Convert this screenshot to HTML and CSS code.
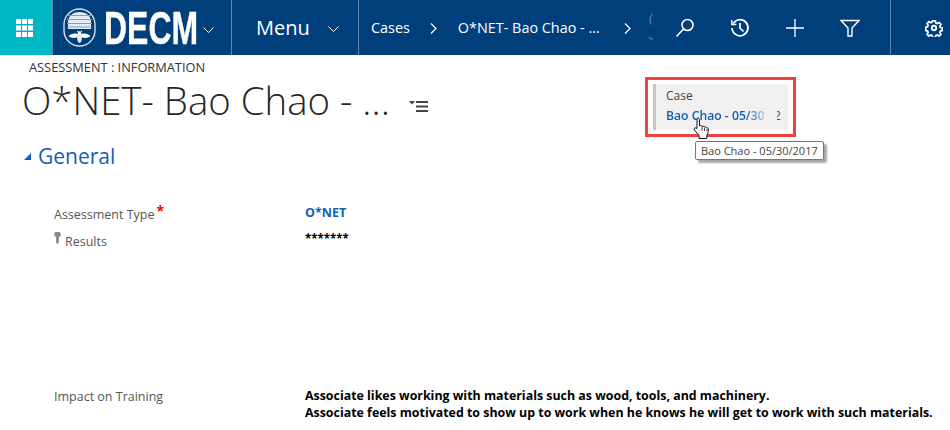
FILE: index.html
```html
<!DOCTYPE html>
<html lang="en">
<head>
    <meta charset="UTF-8">
    <meta name="viewport" content="width=device-width, initial-scale=1.0">
    <title>O*NET- Bao Chao</title>
    <link rel="stylesheet" href="styles.css">
</head>
<body>
    <header class="navbar">
        <div class="tile">
            <svg width="17" height="18" viewBox="0 0 17 18" fill="#fff">
                <rect x="0" y="0" width="5" height="5"/><rect x="6" y="0" width="5" height="5"/><rect x="12" y="0" width="5" height="5"/>
                <rect x="0" y="6.500" width="5" height="5"/><rect x="6" y="6.500" width="5" height="5"/><rect x="12" y="6.500" width="5" height="5"/>
                <rect x="0" y="13" width="5" height="5"/><rect x="6" y="13" width="5" height="5"/><rect x="12" y="13" width="5" height="5"/>
            </svg>
        </div>
        <div class="brand">
            <svg class="brand-mark" width="33" height="39" viewBox="0 0 33 39">
                <rect x="1" y="1" width="31" height="37" rx="15.500" fill="none" stroke="#d5e0ec" stroke-width="1.400"/>
                <path d="M5 21V14C5 8 10 4 16.500 4S28 8 28 14v7z" fill="#e4ebf3"/>
                <path d="M4 7.500h25M4 11.500h25M4 15.500h25M4 19h25" stroke="#7f9fc0" stroke-width="1"/>
                <path d="M16.500 27c-3-2.500-8-2-11 1 3 2.500 8 3 11-1zm0 0c3-2.500 8-2 11 1-3 2.500-8 3-11-1z" fill="#fff"/>
                <ellipse cx="16.500" cy="29" rx="2.500" ry="6" fill="#e4ebf3"/>
                <path d="M14 23l2.500 2 2.500-2" fill="none" stroke="#fff"/>
            </svg>
            <span class="brand-name"><span class="brand-text">DECM</span></span>
            <svg class="chevron" width="11" height="6" viewBox="0 0 11 6"><path d="M.5.500l5 5 5-5" fill="none" stroke="#fff"/></svg>
        </div>
        <div class="menu">
            <span>Menu</span>
            <svg class="chevron" width="11" height="6" viewBox="0 0 11 6"><path d="M.5.500l5 5 5-5" fill="none" stroke="#fff"/></svg>
        </div>
        <nav class="crumbs">
            <span>Cases</span>
            <svg class="crumb-sep" width="7" height="11" viewBox="0 0 7 11"><path d="M1 .500l5 5-5 5" fill="none" stroke="#fff" stroke-width="1.200"/></svg>
            <span>O*NET- Bao Chao - ...</span>
            <svg class="crumb-sep crumb-sep-last" width="7" height="11" viewBox="0 0 7 11"><path d="M1 .500l5 5-5 5" fill="none" stroke="#fff" stroke-width="1.200"/></svg>
            <svg class="crumb-ghost" width="6" height="28" viewBox="0 0 6 28" fill="none" stroke="#4a76a5" stroke-width="1.600"><path d="M4.500 1C2 3 1.500 8 3 11.500"/><path d="M1 24c1 1.500 2.500 2 4 2"/></svg>
        </nav>
        <div class="actions">
            <svg width="20" height="20" viewBox="0 0 20 20" fill="none" stroke="#fff" stroke-width="1.600"><circle cx="12.500" cy="7" r="5.500"/><path d="M8.500 11L1.500 18.500"/></svg>
            <svg width="20" height="20" viewBox="0 0 20 20" fill="none" stroke="#fff" stroke-width="1.700"><path d="M3.200 5.500A8 8 0 1 1 2 10"/><path d="M1.800 2v4.500h4.500" stroke-width="1.400"/><path d="M10 5v5l3.500 3.500"/></svg>
            <svg width="20" height="20" viewBox="0 0 20 20" fill="none" stroke="#fff" stroke-width="1.300"><path d="M10 1v18M1 10h18"/></svg>
            <svg width="20" height="20" viewBox="0 0 20 20" fill="none" stroke="#fff" stroke-width="1.400"><path d="M1 2.500h18L12 10v8H8v-8z"/></svg>
        </div>
        <div class="settings">
            <svg width="18" height="18" viewBox="0 0 18 18" fill="none" stroke="#fff" stroke-width="1.900"><circle cx="9" cy="9" r="2.200"/><path d="M7.500 1h3l.5 2.300 1.700.8 2-1.200 2 2.100-1.200 2 .7 1.500 2 .5v2.800l-2 .6-.7 1.600 1.200 2-2 2-2-1.200-1.700.7-.5 2.200h-3l-.5-2.200-1.700-.7-2 1.200-2-2 1.200-2-.7-1.600-2-.6V8l2-.5.7-1.500-1.200-2 2-2.100 2 1.200 1.700-.8z" transform="translate(.9 .9) scale(.9)"/></svg>
        </div>
    </header>

    <main class="page">
        <div class="record-head">
            <div class="record-title">
                <div class="entity">ASSESSMENT : INFORMATION</div>
                <div class="title-row">
                    <h1>O*NET- Bao Chao - ...</h1>
                    <svg width="20" height="12" viewBox="0 0 20 12" fill="#444">
                        <path d="M0 1h6L3 4.500z"/>
                        <rect x="7" y="1" width="12" height="2"/><rect x="7" y="5.500" width="12" height="2"/><rect x="7" y="10" width="12" height="2"/>
                    </svg>
                </div>
            </div>
            <div class="highlight">
                <div class="case-card">
                    <div class="case-label">Case</div>
                    <div class="case-value"><span class="case-link">Bao Chao - 05/30</span><span class="case-clip">2</span></div>
                </div>
                <div class="tooltip">Bao Chao - 05/30/2017</div>
                <svg class="cursor" width="18" height="23" viewBox="0 0 18 23">
                    <path d="M4 1.500c1-1 2.500-.5 2.500 1V9l1-.3c.6-.3 1.500 0 1.600.7.700-.4 1.800-.2 2 .6.800-.4 2-.1 2.200.8.600-.3 2 0 2 1.200 0 2.500-.2 4.500-1.500 6.500v3H6v-3L1.500 13c-1-1.500.5-3 2.500-1.500z" fill="#fff" stroke="#111" stroke-width="1"/>
                    <path d="M9 10v4M11.500 11v3M14 12v2" stroke="#111" stroke-width=".8"/>
                </svg>
            </div>
        </div>

        <h2 class="section"><span class="twisty"></span>General</h2>

        <div class="field field-type">
            <div class="field-label">Assessment Type<span class="required">*</span></div>
            <div class="field-value link">O*NET</div>
        </div>
        <div class="field field-results">
            <div class="field-label">
                <svg class="key" width="7" height="12" viewBox="0 0 7 13" fill="#8a8a8a"><path d="M1 0h5l1 2v2L5 5.500V12l-1.500 1L2 12V5.500L0 4V2z"/></svg>Results
            </div>
            <div class="field-value masked">*******</div>
        </div>
        <div class="field field-impact">
            <div class="field-label">Impact on Training</div>
            <div class="field-value strong">Associate likes working with materials such as wood, tools, and machinery.<br>Associate feels motivated to show up to work when he knows he will get to work with such materials.</div>
        </div>
    </main>
</body>
</html>
```

FILE: styles.css
```css
html, body {
    height: 430px;
    overflow: hidden;
}

body {
    font-family: 'Open Sans', sans-serif;
    margin: 0;
    padding: 0;
    background-color: #fff;
    color: #444;
}

.navbar {
    display: flex;
    height: 55px;
    background-color: #003e7c;
    color: #fff;
}

.tile {
    display: flex;
    align-items: center;
    justify-content: center;
    width: 52px;
    padding-right: 3px;
    box-sizing: border-box;
    background-color: #00b8c4;
    flex: none;
}

.brand {
    display: flex;
    align-items: center;
    width: 180px;
    padding-left: 10px;
    box-sizing: border-box;
    border-left: 1px solid #5f86ad;
    border-right: 1px solid #5f86ad;
    flex: none;
}

.brand-name {
    display: block;
    width: 93px;
    margin-left: 8px;
}

.brand-text {
    display: block;
    font-family: 'Liberation Sans', sans-serif;
    font-weight: bold;
    font-size: 47px;
    line-height: 54px;
    -webkit-text-stroke: 0.4px #fff;
    transform: scaleX(0.68);
    transform-origin: left center;
}

.brand .chevron {
    margin-left: 6px;
    margin-top: 5px;
}

.menu {
    display: flex;
    align-items: center;
    width: 127px;
    padding-left: 24px;
    box-sizing: border-box;
    border-right: 1px solid #5f86ad;
    font-size: 20px;
    flex: none;
}

.menu .chevron {
    margin-left: 18px;
    margin-top: 3px;
}

.crumbs {
    display: flex;
    align-items: center;
    width: 308px;
    padding-left: 12px;
    box-sizing: border-box;
    font-size: 14.4px;
    white-space: nowrap;
    flex: none;
}

.crumb-sep {
    margin: 2px 21px 0 20px;
    flex: none;
}

.crumb-sep-last {
    margin: 2px 17px 0 24px;
}

.crumb-ghost {
    flex: none;
    margin-top: -1px;
}

.actions {
    display: flex;
    align-items: center;
    gap: 35px;
    width: 223px;
    padding-left: 8px;
    box-sizing: border-box;
    flex: none;
}

.settings {
    display: flex;
    align-items: center;
    justify-content: center;
    flex: 1;
    padding-left: 26px;
    border-left: 1px solid #5f86ad;
}

.page {
    padding: 4px 0 0 22px;
}

.record-head {
    display: flex;
    justify-content: space-between;
}

.entity {
    margin-left: 7px;
    font-size: 12.8px;
    line-height: 16px;
    color: #333;
}

.title-row {
    display: flex;
    align-items: center;
    gap: 19px;
}

.title-row h1 {
    margin: 0;
    font-size: 38.4px;
    font-weight: 300;
    line-height: 50px;
    white-space: nowrap;
    color: #262626;
}

.title-row svg {
    margin-top: 11px;
}

.highlight {
    position: relative;
    width: 151px;
    height: 60px;
    margin: 18px 154px 0 0;
    padding: 4px 5px;
    box-sizing: border-box;
    border: 3px solid #f04040;
}

.case-card {
    height: 46px;
    padding: 3px 0 0 10px;
    box-sizing: border-box;
    background-color: #f1eff0;
    border-left: 3px solid #c4c4c4;
    font-size: 12px;
}

.case-label {
    line-height: 18px;
    color: #444;
}

.case-value {
    display: flex;
    justify-content: space-between;
    padding-right: 7px;
    margin-top: 2px;
    line-height: 18px;
    white-space: nowrap;
}

.case-link {
    width: 105px;
    overflow: hidden;
    font-size: 12.2px;
    font-weight: 600;
    color: #1160b7;
    -webkit-mask-image: linear-gradient(to right, #000 76%, transparent 100%);
    mask-image: linear-gradient(to right, #000 76%, transparent 100%);
}

.case-clip {
    width: 4px;
    overflow: hidden;
    text-indent: -3px;
    color: #1160b7;
}

.tooltip {
    position: absolute;
    left: 47px;
    top: 61px;
    padding: 1px 5px;
    font-size: 11px;
    line-height: 15px;
    white-space: nowrap;
    color: #444;
    background-color: #fff;
    border: 1px solid #777;
    border-radius: 2px;
    box-shadow: 3px 3px 2px rgba(0, 0, 0, 0.35);
}

.cursor {
    position: absolute;
    left: 45px;
    top: 37px;
}

.section {
    display: flex;
    align-items: center;
    margin: 4px 0 0;
    font-size: 21px;
    font-weight: 400;
    line-height: 30px;
    color: #1160b7;
}

.twisty {
    width: 0;
    height: 0;
    margin: 0 7px 0 2px;
    border-left: 7px solid transparent;
    border-bottom: 7px solid #1160b7;
}

.field {
    display: flex;
    padding-left: 32px;
    font-size: 12.5px;
    line-height: 18px;
}

.field-label {
    width: 251px;
    flex: none;
    color: #555;
}

.field-type {
    margin-top: 34px;
}

.field-results {
    margin-top: 8px;
}

.field-impact {
    margin-top: 137px;
}

.required {
    position: relative;
    top: -3px;
    margin-left: 2px;
    font-size: 14px;
    font-weight: bold;
    color: #e00;
}

.key {
    margin-right: 4px;
    vertical-align: 2px;
}

.field-value {
    margin-top: -1px;
    color: #000;
}

.link {
    color: #1160b7;
    font-weight: bold;
}

.masked {
    font-size: 11.5px;
    font-weight: bold;
    margin-top: -2px;
}

.strong {
    font-size: 12.4px;
    font-weight: bold;
    line-height: 17px;
    white-space: nowrap;
}
```
